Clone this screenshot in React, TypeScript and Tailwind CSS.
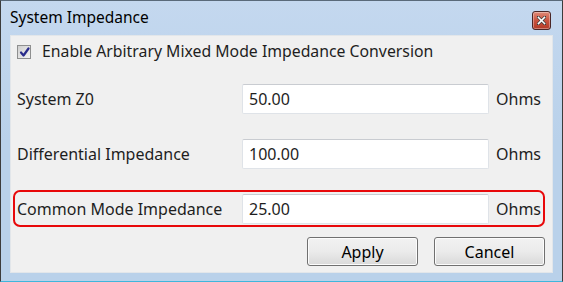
import React from 'react';

const rows = [
  { label: 'System Z0', value: '50.00', highlight: false },
  { label: 'Differential Impedance', value: '100.00', highlight: false },
  { label: 'Common Mode Impedance', value: '25.00', highlight: true },
];

const CloseButton: React.FC = () => (
  <div className="w-[19px] h-[19px] rounded-[3px] border border-[#4a2626] bg-gradient-to-b from-[#e08a78] via-[#c9533f] to-[#b23a26] flex items-center justify-center shadow-[inset_0_0_0_1px_rgba(255,255,255,0.35)]">
    <svg width="9" height="9" viewBox="0 0 9 9">
      <path d="M1 1 L8 8 M8 1 L1 8" stroke="#3a3a3a" strokeWidth="3" strokeLinecap="square" />
      <path d="M1.5 1.5 L7.5 7.5 M7.5 1.5 L1.5 7.5" stroke="#ffffff" strokeWidth="1.6" strokeLinecap="square" />
    </svg>
  </div>
);

const CheckBox: React.FC = () => (
  <div className="w-[14px] h-[14px] border border-[#8e8f8f] bg-gradient-to-br from-[#cfcfcf] to-[#f4f4f4] flex items-center justify-center">
    <svg width="11" height="11" viewBox="0 0 11 11">
      <path d="M2 5.5 L4.5 8.5 L9.5 1.5" fill="none" stroke="#2a2c8c" strokeWidth="2.2" strokeLinejoin="round" strokeLinecap="round" />
    </svg>
  </div>
);

export default function App() {
  return (
    <div className="w-[563px] h-[282px] flex flex-col border-x border-t border-x-[#3c3c3c] border-t-[#5a6a7a] border-b border-b-[#3fb6dc] bg-gradient-to-b from-[#c4d8ef] via-[#b9d1ea] to-[#b9d1ea] font-['Noto_Sans',sans-serif] text-[#1e1e1e]">
      <div className="h-[34px] flex items-center justify-between pl-[9px] pr-[11px]">
        <span className="text-[15.5px] text-black pb-[1px]">System Impedance</span>
        <div className="pt-[5px]">
          <CloseButton />
        </div>
      </div>
      <div className="flex-1 mx-[9px] mb-[8px] bg-[#f0f0f0] border border-[#e2e6ea] flex flex-col">
        <div className="flex items-center gap-[11px] pl-[6px] pt-[5px] h-[27px]">
          <CheckBox />
          <span className="text-[15.8px]">Enable Arbitrary Mixed Mode Impedance Conversion</span>
        </div>
        <div className="flex flex-col gap-[18px] mt-[17px]">
          {rows.map((r) => (
            <div
              key={r.label}
              className={`h-[37px] mx-[2px] w-[532px] rounded-[7px] border-2 flex items-center pl-[2px] ${r.highlight ? 'border-[#e8080a]' : 'border-transparent'}`}
            >
              <span className="w-[225px] text-[16px]">{r.label}</span>
              <div className="w-[247px] h-[30px] bg-white border border-[#dfe3e8] border-t-[#c9ccd1] rounded-[2px] flex items-center pl-[6px] text-[16px]">
                {r.value}
              </div>
              <span className="ml-[7px] text-[16px]">Ohms</span>
            </div>
          ))}
        </div>
        <div className="flex justify-end gap-[16px] pr-[7px] mt-[10px]">
          {['Apply', 'Cancel'].map((b) => (
            <button
              key={b}
              className="w-[111px] h-[29px] rounded-[3px] border border-[#707070] bg-gradient-to-b from-[#f2f2f2] via-[#ebebeb] to-[#d9d9d9] shadow-[inset_0_0_0_1px_#fcfcfc] text-[16px] text-black"
            >
              {b}
            </button>
          ))}
        </div>
      </div>
    </div>
  );
}
